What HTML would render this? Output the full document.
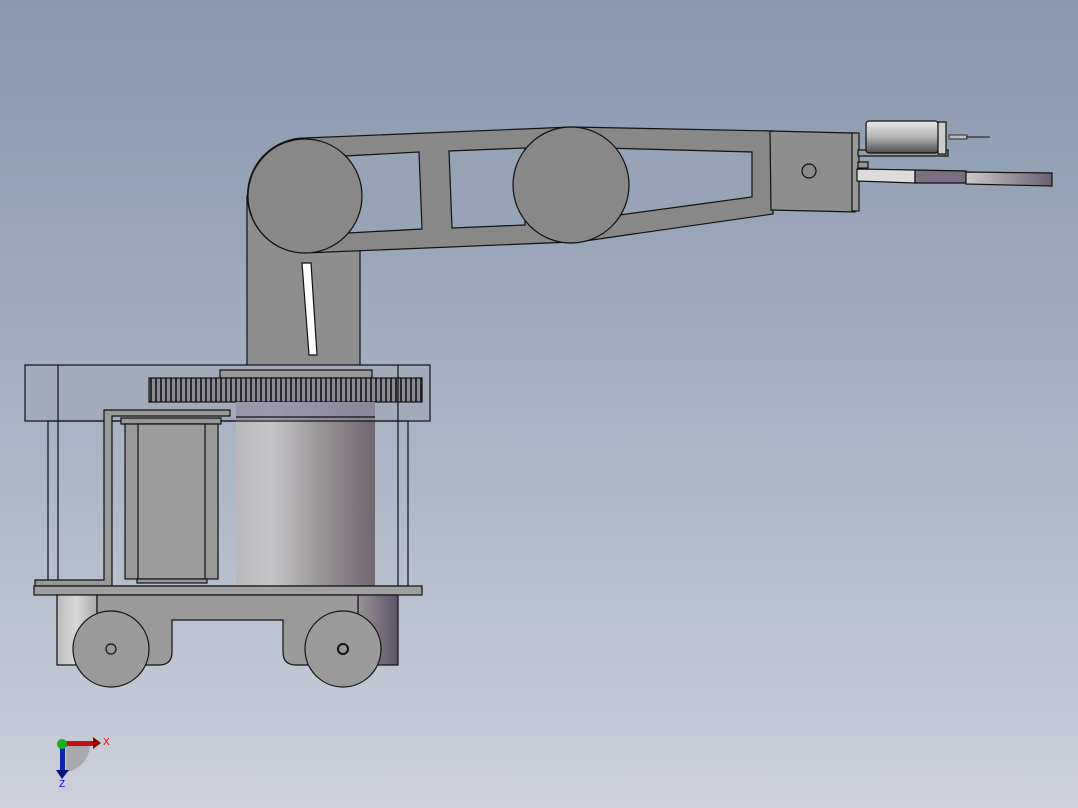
<!DOCTYPE html>
<html><head><meta charset="utf-8"><style>
html,body{margin:0;padding:0;width:1078px;height:808px;overflow:hidden}
</style></head><body>
<svg width="1078" height="808" viewBox="0 0 1078 808" xmlns="http://www.w3.org/2000/svg" font-family="Liberation Sans, sans-serif">
<defs>
<linearGradient id="bg" x1="0" y1="0" x2="0" y2="1">
<stop offset="0" stop-color="#8797ad"/><stop offset="0.5" stop-color="#a6b1c3"/><stop offset="1" stop-color="#cdd0da"/></linearGradient>
<linearGradient id="cyl" x1="0" y1="0" x2="1" y2="0">
<stop offset="0" stop-color="#b8b8bc"/><stop offset="0.25" stop-color="#c6c6c8"/><stop offset="0.6" stop-color="#9a9698"/><stop offset="1" stop-color="#6f6670"/></linearGradient>
<linearGradient id="mot" x1="0" y1="0" x2="0" y2="1">
<stop offset="0" stop-color="#e8e8e8"/><stop offset="0.5" stop-color="#b4b4b4"/><stop offset="1" stop-color="#505050"/></linearGradient>
<linearGradient id="side" x1="0" y1="0" x2="1" y2="0">
<stop offset="0" stop-color="#c8c8ca"/><stop offset="1" stop-color="#6a6070"/></linearGradient>
<linearGradient id="sideL" x1="0" y1="0" x2="1" y2="0">
<stop offset="0" stop-color="#bdbdbf"/><stop offset="0.5" stop-color="#d8d8d8"/><stop offset="1" stop-color="#a8a8a8"/></linearGradient>
<linearGradient id="sideR" x1="0" y1="0" x2="1" y2="0">
<stop offset="0" stop-color="#9a9298"/><stop offset="1" stop-color="#5e5468"/></linearGradient>
<pattern id="teeth" width="5" height="24" patternUnits="userSpaceOnUse">
<rect width="5" height="24" fill="#8a8a90"/><rect width="2" height="24" fill="#2a2a30"/></pattern>
</defs>
<rect width="1078" height="808" fill="url(#bg)"/>
<g stroke="#111" stroke-width="1.2">
<!-- column -->
<rect x="247" y="196" width="113" height="172" fill="#8e8e8e"/>
<polygon points="302,263 311,263 317,355 309,355" fill="#fff"/>
<!-- upper arm links -->
<path d="M305,138 L571,127 L571,242 L305,253 A57,57 0 0 1 305,138 Z" fill="#888"/>
<path d="M571,127 L773,131 L773,214 L571,243 A58,58 0 0 1 571,127 Z" fill="#888"/>
<polygon points="345,156 419,152 422,229 348,233" fill="#97a4b8"/>
<polygon points="449,151 525,148 525,225 452,228" fill="#97a4b8"/>
<path d="M603,148 L752,152 L752,197 L612,216 Q628,182 603,148 Z" fill="#97a4b8"/>
<circle cx="305" cy="196" r="57" fill="#888"/>
<circle cx="571" cy="185" r="58" fill="#888"/>
<!-- end block -->
<polygon points="770,131 852,133 855,212 771,210" fill="#8e8e8e"/>
<rect x="852" y="133" width="7" height="78" fill="#999"/>
<circle cx="809" cy="171" r="7" fill="#888"/>
<!-- motor -->
<rect x="858" y="150" width="90" height="6" fill="#999"/>
<rect x="866" y="121" width="72" height="32" rx="3" fill="url(#mot)"/>
<rect x="938" y="122" width="8" height="32" fill="#ccc"/>
<rect x="949" y="135" width="18" height="4" fill="#bbb" stroke-width="0.8"/>
<line x1="966" y1="137" x2="990" y2="137" stroke-width="1"/>
<!-- gripper -->
<rect x="858" y="162" width="10" height="6" fill="#999"/>
<polygon points="857,169 915,170 915,183 857,181" fill="#dcdcdc"/>
<polygon points="915,170 966,171 966,183 915,183" fill="#7a7080"/>
<polygon points="966,172 1052,173 1052,186 966,184" fill="url(#side)"/>
<!-- base top box -->
<rect x="25" y="365" width="405" height="56" fill="#a3abbb"/>
<rect x="220" y="370" width="152" height="8" fill="#999"/>
<rect x="149" y="378" width="273" height="24" fill="url(#teeth)"/>
<rect x="236" y="402" width="139" height="184" fill="url(#cyl)" stroke="none"/>
<rect x="236" y="402" width="139" height="18" fill="#8f8fa4" stroke="none" opacity="0.8"/>
<line x1="236" y1="417" x2="375" y2="417"/>
<rect x="48" y="421" width="360" height="165" fill="none"/>
<line x1="58" y1="365" x2="58" y2="590"/>
<line x1="398" y1="365" x2="398" y2="590"/>
<!-- bracket -->
<path d="M35,580 L104,580 L104,410 L230,410 L230,416 L112,416 L112,586 L35,586 Z" fill="#999"/>
<rect x="121" y="418" width="100" height="6" fill="#999"/>
<rect x="125" y="424" width="93" height="155" fill="#999"/>
<rect x="138" y="424" width="67" height="155" fill="#9c9c9c"/>
<rect x="137" y="579" width="70" height="4" fill="#999"/>
<!-- bottom plate -->
<rect x="34" y="586" width="388" height="9" fill="#a0a0a0"/>
<!-- chassis -->
<rect x="57" y="595" width="40" height="70" fill="url(#sideL)"/>
<rect x="358" y="595" width="40" height="70" fill="url(#sideR)"/>
<path d="M97,595 L358,595 L358,665 L296,665 Q283,665 283,652 L283,620 L172,620 L172,652 Q172,665 159,665 L97,665 Z" fill="#9a9a9a"/>
<circle cx="111" cy="649" r="38" fill="#9a9a9a"/>
<circle cx="111" cy="649" r="5" fill="#999"/>
<circle cx="343" cy="649" r="38" fill="#9a9a9a"/>
<circle cx="343" cy="649" r="5" fill="#999" stroke-width="2"/>
</g>
<!-- triad -->
<path d="M66,745 L90,745 A28,28 0 0 1 66,772 Z" fill="#888" opacity="0.5"/>
<rect x="64" y="741" width="30" height="5" fill="#c01010"/>
<polygon points="93,737 101,743 93,749" fill="#900"/>
<rect x="60" y="745" width="5" height="26" fill="#1020b0"/>
<polygon points="56,770 69,770 62,779" fill="#001080"/>
<circle cx="62" cy="744" r="5" fill="#18b018"/>
<text x="103" y="745" font-size="10" fill="#e00">X</text>
<text x="59" y="787" font-size="10" fill="#00f">Z</text>
</svg>
</body></html>
